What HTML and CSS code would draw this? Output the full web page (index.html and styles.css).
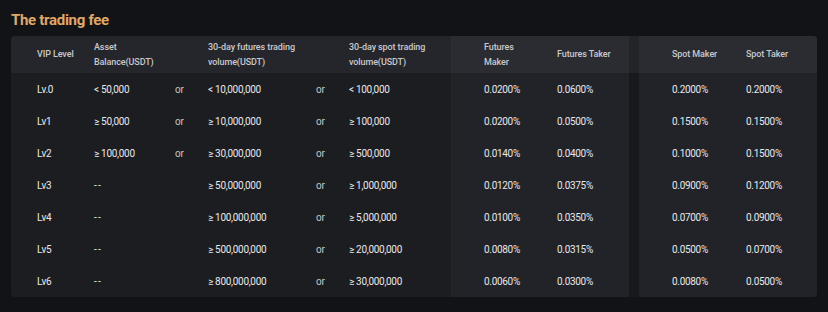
FILE: index.html
```html
<!DOCTYPE html>
<html lang="en">
  <head>
    <meta charset="UTF-8" />
    <title>The trading fee</title>
    <link rel="stylesheet" href="styles.css">
  </head>
  <body>
    <section class="fee">
      <h2 class="fee-title">The trading fee</h2>
      <div class="fee-table">
        <div class="fee-row fee-head">
          <div class="cell first">VIP Level</div>
          <div class="cell">Asset<br />Balance(USDT)</div>
          <div class="cell"></div>
          <div class="cell">30-day futures trading<br />volume(USDT)</div>
          <div class="cell"></div>
          <div class="cell">30-day spot trading<br />volume(USDT)</div>
          <div class="cell hl pad">Futures<br />Maker</div>
          <div class="cell hl">Futures Taker</div>
          <div class="cell gap"></div>
          <div class="cell hl pad">Spot Maker</div>
          <div class="cell hl">Spot Taker</div>
        </div>

        <div class="fee-row">
          <div class="cell first">Lv.0</div>
          <div class="cell">&lt; 50,000</div>
          <div class="cell or">or</div>
          <div class="cell">&lt; 10,000,000</div>
          <div class="cell or">or</div>
          <div class="cell">&lt; 100,000</div>
          <div class="cell hl pad">0.0200%</div>
          <div class="cell hl">0.0600%</div>
          <div class="cell gap"></div>
          <div class="cell hl pad">0.2000%</div>
          <div class="cell hl">0.2000%</div>
        </div>

        <div class="fee-row">
          <div class="cell first">Lv1</div>
          <div class="cell">&ge; 50,000</div>
          <div class="cell or">or</div>
          <div class="cell">&ge; 10,000,000</div>
          <div class="cell or">or</div>
          <div class="cell">&ge; 100,000</div>
          <div class="cell hl pad">0.0200%</div>
          <div class="cell hl">0.0500%</div>
          <div class="cell gap"></div>
          <div class="cell hl pad">0.1500%</div>
          <div class="cell hl">0.1500%</div>
        </div>

        <div class="fee-row">
          <div class="cell first">Lv2</div>
          <div class="cell">&ge; 100,000</div>
          <div class="cell or">or</div>
          <div class="cell">&ge; 30,000,000</div>
          <div class="cell or">or</div>
          <div class="cell">&ge; 500,000</div>
          <div class="cell hl pad">0.0140%</div>
          <div class="cell hl">0.0400%</div>
          <div class="cell gap"></div>
          <div class="cell hl pad">0.1000%</div>
          <div class="cell hl">0.1500%</div>
        </div>

        <div class="fee-row">
          <div class="cell first">Lv3</div>
          <div class="cell dash">--</div>
          <div class="cell or"></div>
          <div class="cell">&ge; 50,000,000</div>
          <div class="cell or">or</div>
          <div class="cell">&ge; 1,000,000</div>
          <div class="cell hl pad">0.0120%</div>
          <div class="cell hl">0.0375%</div>
          <div class="cell gap"></div>
          <div class="cell hl pad">0.0900%</div>
          <div class="cell hl">0.1200%</div>
        </div>

        <div class="fee-row">
          <div class="cell first">Lv4</div>
          <div class="cell dash">--</div>
          <div class="cell or"></div>
          <div class="cell">&ge; 100,000,000</div>
          <div class="cell or">or</div>
          <div class="cell">&ge; 5,000,000</div>
          <div class="cell hl pad">0.0100%</div>
          <div class="cell hl">0.0350%</div>
          <div class="cell gap"></div>
          <div class="cell hl pad">0.0700%</div>
          <div class="cell hl">0.0900%</div>
        </div>

        <div class="fee-row">
          <div class="cell first">Lv5</div>
          <div class="cell dash">--</div>
          <div class="cell or"></div>
          <div class="cell">&ge; 500,000,000</div>
          <div class="cell or">or</div>
          <div class="cell">&ge; 20,000,000</div>
          <div class="cell hl pad">0.0080%</div>
          <div class="cell hl">0.0315%</div>
          <div class="cell gap"></div>
          <div class="cell hl pad">0.0500%</div>
          <div class="cell hl">0.0700%</div>
        </div>

        <div class="fee-row">
          <div class="cell first">Lv6</div>
          <div class="cell dash">--</div>
          <div class="cell or"></div>
          <div class="cell">&ge; 800,000,000</div>
          <div class="cell or">or</div>
          <div class="cell">&ge; 30,000,000</div>
          <div class="cell hl pad">0.0060%</div>
          <div class="cell hl">0.0300%</div>
          <div class="cell gap"></div>
          <div class="cell hl pad">0.0080%</div>
          <div class="cell hl">0.0500%</div>
        </div>
      </div>
    </section>
  </body>
</html>
```

FILE: styles.css
```css
:root {
  --page: #121317;
  --table: #1c1d21;
  --head: #25262b;
  --hl: #222328;
  --hl-head: #2b2c31;
  --gap: #18191d;
  --gap-head: #232428;
  --gold: #e0a865;
  --text: #e8e8ea;
  --text-head: #c9c9cd;
  --text-or: #c4c4c8;
}

* {
  margin: 0;
  padding: 0;
  box-sizing: border-box;
}

body {
  font-family: Roboto, "Liberation Sans", sans-serif;
  background-color: var(--page);
  color: var(--text);
}

.fee {
  padding: 10px 11px;
}

.fee-title {
  font-size: 15px;
  line-height: 20px;
  font-weight: 700;
  letter-spacing: -0.3px;
  color: var(--gold);
  margin-bottom: 6px;
}

.fee-table {
  width: 806px;
  background-color: var(--table);
  border-radius: 4px;
  overflow: hidden;
}

.fee-row {
  display: grid;
  grid-template-columns: 83px 81px 33px 108px 33px 102px 106px 72px 10px 107px 71px;
  height: 32px;
  font-size: 10px;
  letter-spacing: -0.3px;
}

.fee-head {
  height: 37px;
  font-size: 9px;
  font-weight: 500;
  line-height: 15px;
  letter-spacing: -0.1px;
  color: var(--text-head);
  background-color: var(--head);
}

.cell {
  display: flex;
  align-items: center;
  white-space: nowrap;
}

.first {
  padding-left: 26px;
}

.pad {
  padding-left: 33px;
}

.dash {
  letter-spacing: 1.2px;
}

.or {
  color: var(--text-or);
}

.hl {
  background-color: var(--hl);
}

.gap {
  background-color: var(--gap);
}

.fee-head .hl {
  background-color: var(--hl-head);
}

.fee-head .gap {
  background-color: var(--gap-head);
}
```
